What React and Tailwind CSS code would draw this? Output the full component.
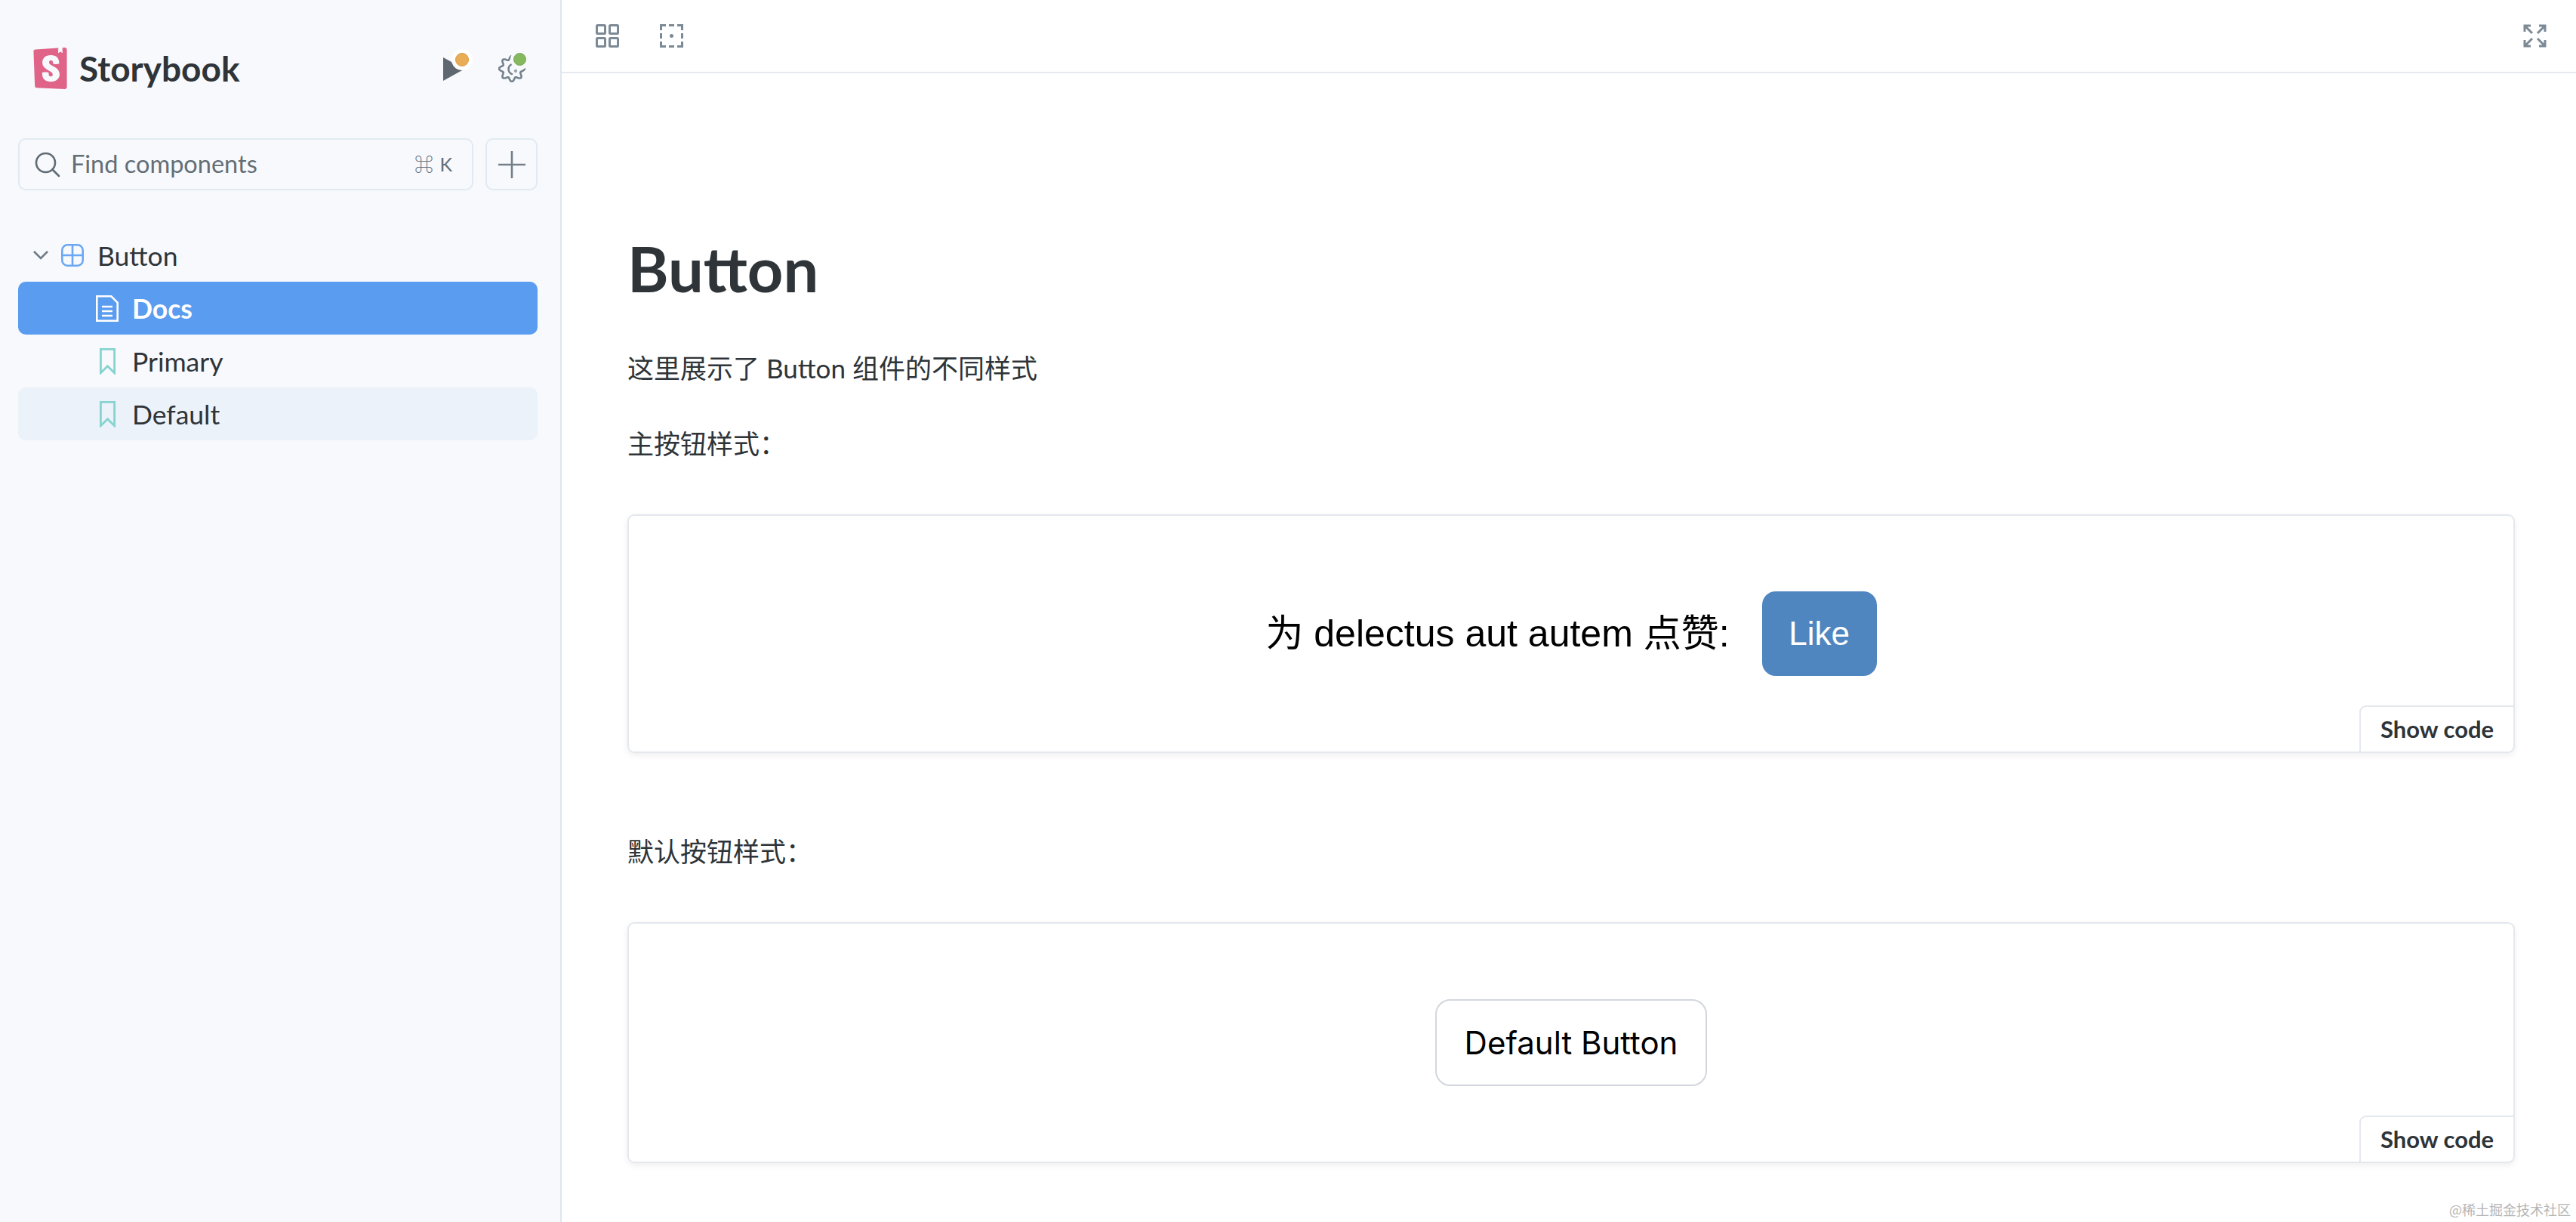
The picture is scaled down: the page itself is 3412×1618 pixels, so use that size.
import { SiStorybook } from 'react-icons/si';

const sans = 'font-["Lato","Noto_Sans_CJK_SC",sans-serif]';

// wavy outline of the cog, eight teeth
const cogPath = Array.from({ length: 97 }, (_, i) => {
  const a = (i / 96) * Math.PI * 2;
  const r = 14.6 + 2.4 * Math.cos(8 * a);
  return `${i === 0 ? 'M' : 'L'}${(18 + r * Math.cos(a)).toFixed(2)} ${(18 + r * Math.sin(a)).toFixed(2)}`;
}).join(' ');

function GridIcon() {
  return (
    <svg width="31" height="31" viewBox="0 0 31 31" fill="none" stroke="#7c8a96" strokeWidth="3">
      <rect x="1.5" y="1.5" width="11" height="11" rx="1" />
      <rect x="18.5" y="1.5" width="11" height="11" rx="1" />
      <rect x="1.5" y="18.5" width="11" height="11" rx="1" />
      <rect x="18.5" y="18.5" width="11" height="11" rx="1" />
    </svg>
  );
}

function OutlineIcon() {
  return (
    <svg width="31" height="31" viewBox="0 0 31 31" fill="none" stroke="#7c8a96" strokeWidth="3">
      <path d="M1.5 8V1.5H8M12 1.5h7M23 1.5h6.500V8M29.500 12v7M29.500 23v6.500H23M19 29.500h-7M8 29.500H1.500V23M1.500 19v-7" />
      <circle cx="15.5" cy="15.5" r="2.5" fill="#7c8a96" stroke="none" />
    </svg>
  );
}

function ExpandIcon() {
  return (
    <svg width="31" height="31" viewBox="0 0 31 31" fill="none" stroke="#7c8a96" strokeWidth="3">
      <path d="M2 10V2h8M2 2l10 10M21 2h8v8M29 2 19 12M2 21v8h8M2 29l10-10M29 21v8h-8M29 29 19 19" />
    </svg>
  );
}

function GearIcon() {
  return (
    <svg width="36" height="36" viewBox="0 0 36 36" fill="none" stroke="#73828c" strokeWidth="2.6" strokeLinecap="round">
      <path d={cogPath} />
      <path d="M20 11.500a7 7 0 0 0-2 13.500" />
      <circle cx="23" cy="21" r="0.6" />
    </svg>
  );
}

function SearchIcon() {
  return (
    <svg width="34" height="34" viewBox="0 0 34 34" fill="none" stroke="#5f6a73" strokeWidth="2.6" strokeLinecap="round">
      <circle cx="14.5" cy="14.5" r="12.5" />
      <path d="m24 24 8 8" />
    </svg>
  );
}

function ComponentIcon() {
  return (
    <svg width="30" height="30" viewBox="0 0 30 30" fill="none" stroke="#6aa8f5" strokeWidth="2.6">
      <rect x="1.3" y="1.3" width="27.4" height="27.4" rx="7" />
      <path d="M15 1.3v27.4M1.3 15h27.4" />
    </svg>
  );
}

function DocIcon() {
  return (
    <svg width="30" height="35" viewBox="0 0 30 35" fill="none" stroke="#fff" strokeWidth="2.6">
      <path d="M1.3 1.3h19l8.400 8.400v24H1.300z" />
      <path d="M8 15h14M8 21h14M8 27h14" />
    </svg>
  );
}

function BookmarkIcon() {
  return (
    <svg width="21" height="35" viewBox="0 0 21 35" fill="none" stroke="#86d3cf" strokeWidth="2.8">
      <path d="M1.4 1.4h18.200v31.400l-9.100-9-9.100 9z" />
    </svg>
  );
}

function Preview({ children, height }) {
  return (
    <div className={`relative flex items-center justify-center rounded-[9px] border-2 border-[#e4e8ee] shadow-[0_3px_8px_rgba(0,0,0,0.07)] ${height}`}>
      {children}
      <button className={`absolute -bottom-[2px] -right-[2px] flex h-[63px] w-[206px] items-center justify-center rounded-tl-[9px] rounded-br-[9px] border-2 border-[#e4e8ee] bg-white text-[31px] font-bold text-[#2e3438] ${sans}`}>
        Show code
      </button>
    </div>
  );
}

export default function App() {
  return (
    <div className={`relative flex h-[1618px] w-[3412px] overflow-hidden bg-white ${sans}`}>
      {/* Sidebar */}
      <aside className="flex w-[744px] shrink-0 flex-col border-r-2 border-[#dfe6ef] bg-[#f7f9fd] pl-[24px] pr-[23px] pt-[63px]">
        <div className="flex h-[55px] items-center">
          <SiStorybook size={55} color="#df6488" className="ml-[15px]" />
          <span className="ml-[11px] text-[46px] font-bold text-[#2e3438]">Storybook</span>
          <div className="ml-auto flex items-center gap-[32px] pr-[23px]">
            <div className="relative h-[40px] w-[40px]">
              <svg width="40" height="40" viewBox="0 0 40 40" className="absolute -top-[1px] -left-[4px]">
                <path d="M3 6v31l28-15.500z" fill="#5f6870" />
              </svg>
              <span className="absolute -top-[6px] left-[10px] h-[28px] w-[28px] rounded-full bg-white" />
              <span className="absolute -top-[1px] left-[15px] h-[18px] w-[18px] rounded-full border border-[#d99a3d] bg-[#e9ad55]" />
            </div>
            <div className="relative h-[36px] w-[36px]">
              <GearIcon />
              <span className="absolute -top-[7px] left-[16px] h-[26px] w-[26px] rounded-full bg-[#f7f9fd]" />
              <span className="absolute -top-[3px] left-[20px] h-[17px] w-[17px] rounded-full border border-[#79a955] bg-[#86b85f]" />
            </div>
          </div>
        </div>

        <div className="mt-[65px] flex h-[69px] gap-[16px]">
          <div className="flex w-[603px] items-center rounded-[10px] border-2 border-[#e1eaf2] pl-[20px] pr-[25px] text-[#636e76]">
            <SearchIcon />
            <span className="ml-[14px] text-[32.5px]">Find components</span>
            <span className="ml-auto text-[25px] tracking-[1px]">⌘ K</span>
          </div>
          <div className="flex w-[69px] items-center justify-center rounded-[10px] border-2 border-[#e1eaf2]">
            <svg width="36" height="36" viewBox="0 0 36 36" stroke="#73808a" strokeWidth="2.6">
              <path d="M18 0v36M0 18h36" />
            </svg>
          </div>
        </div>

        <nav className="mr-[7px] mt-[51px] flex flex-col text-[35.5px] text-[#2e3438]">
          <div className="flex h-[70px] items-center pl-[20px]">
            <svg width="20" height="12" viewBox="0 0 20 12" fill="none" stroke="#6f7b84" strokeWidth="2.6">
              <path d="m1 1 9 9 9-9" />
            </svg>
            <span className="ml-[17px]"><ComponentIcon /></span>
            <span className="ml-[18px] pt-[2px]">Button</span>
          </div>
          <div className="flex h-[70px] items-center gap-[18px] rounded-[10px] bg-[#5a9cf0] pl-[103px] font-bold text-white">
            <DocIcon />
            <span className="pt-[2px]">Docs</span>
          </div>
          <div className="flex h-[70px] items-center gap-[18px] rounded-[10px] pl-[103px]">
            <span className="flex w-[30px] justify-center"><BookmarkIcon /></span>
            <span className="pt-[2px]">Primary</span>
          </div>
          <div className="flex h-[70px] items-center gap-[18px] rounded-[10px] bg-[#ecf2fa] pl-[103px]">
            <span className="flex w-[30px] justify-center"><BookmarkIcon /></span>
            <span className="pt-[2px]">Default</span>
          </div>
        </nav>
      </aside>

      {/* Main */}
      <main className="min-w-0 flex-1">
        <div className="flex h-[97px] items-center gap-[54px] border-b-2 border-[#e6e9ed] pb-[1px] pl-[45px] pr-[39px]">
          <GridIcon />
          <OutlineIcon />
          <span className="ml-auto"><ExpandIcon /></span>
        </div>

        <div className="pl-[87px] pr-[81px] pt-[208px] text-[#2e3438]">
          <h1 className="h-[100px] text-[83px] font-bold leading-[100px]">Button</h1>
          <p className="mt-[57px] h-[50px] text-[35px] leading-[50px]">这里展示了 Button 组件的不同样式</p>
          <p className="mt-[50px] h-[50px] text-[35px] leading-[50px]">主按钮样式：</p>

          <div className="mt-[69px]">
            <Preview height="h-[316px]">
              <div className="flex items-center gap-[43px] font-['Liberation_Sans','Noto_Sans_CJK_SC',sans-serif] text-[50px] text-black">
                <span>为 delectus aut autem 点赞:</span>
                <button className="flex h-[112px] w-[152px] items-center justify-center rounded-[18px] bg-[#4f86bf] text-[44px] text-white">Like</button>
              </div>
            </Preview>
          </div>

          <p className="mt-[105px] h-[50px] text-[35px] leading-[50px]">默认按钮样式：</p>

          <div className="mt-[69px]">
            <Preview height="h-[319px]">
              <button className="flex h-[115px] w-[360px] items-center justify-center rounded-[20px] border-2 border-[#d2d6dc] bg-white font-['Inter',sans-serif] text-[42px] text-black">
                Default Button
              </button>
            </Preview>
          </div>
        </div>
      </main>

      <span className="absolute bottom-[7px] right-[7px] font-['Noto_Sans_CJK_SC',sans-serif] text-[18px] leading-[20px] text-[#b5b5b5]">@稀土掘金技术社区</span>
    </div>
  );
}
